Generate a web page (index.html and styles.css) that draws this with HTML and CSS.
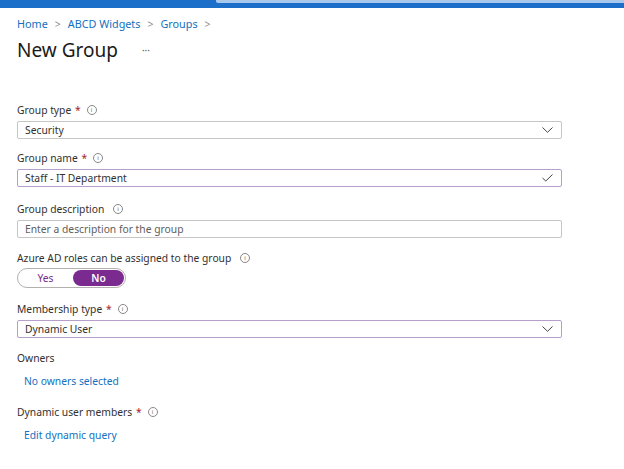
FILE: index.html
```html
<!DOCTYPE html>
<html>
<head>
<meta charset="utf-8">
<link rel="stylesheet" href="styles.css">
</head>
<body>
<header class="topbar">
  <div class="topbar-left"></div>
  <div class="topbar-search"></div>
</header>
<main class="page">
  <nav class="crumbs">
    <a>Home</a><span class="sep">&gt;</span><a>ABCD Widgets</a><span class="sep">&gt;</span><a>Groups</a><span class="sep">&gt;</span>
  </nav>
  <div class="title-row">
    <h1>New Group</h1>
    <span class="more">···</span>
  </div>

  <div class="field f1">
    <div class="label">Group type <span class="req">*</span> <span class="info">i</span></div>
    <div class="box">
      <span class="value">Security</span>
      <svg class="chev" width="11" height="6" viewBox="0 0 11 6"><path d="M0.5 0.5 L5.5 5.3 L10.5 0.5" fill="none" stroke="#444" stroke-width="1"/></svg>
    </div>
  </div>

  <div class="field f2">
    <div class="label">Group name <span class="req">*</span> <span class="info">i</span></div>
    <div class="box active">
      <span class="value">Staff - IT Department</span>
      <svg class="chev" width="11" height="8" viewBox="0 0 11 8"><path d="M0.5 4 L3.8 7 L10.5 0.5" fill="none" stroke="#444" stroke-width="1"/></svg>
    </div>
  </div>

  <div class="field f3">
    <div class="label">Group description <span class="info">i</span></div>
    <div class="box">
      <span class="value placeholder">Enter a description for the group</span>
    </div>
  </div>

  <div class="field f4">
    <div class="label">Azure AD roles can be assigned to the group <span class="info">i</span></div>
    <div class="toggle">
      <span class="opt">Yes</span>
      <span class="opt on">No</span>
    </div>
  </div>

  <div class="field f5">
    <div class="label">Membership type <span class="req">*</span> <span class="info">i</span></div>
    <div class="box active">
      <span class="value">Dynamic User</span>
      <svg class="chev" width="11" height="6" viewBox="0 0 11 6"><path d="M0.5 0.5 L5.5 5.3 L10.5 0.5" fill="none" stroke="#444" stroke-width="1"/></svg>
    </div>
  </div>

  <div class="field f6">
    <div class="label">Owners</div>
    <a class="link">No owners selected</a>
  </div>

  <div class="field f7">
    <div class="label">Dynamic user members <span class="req">*</span> <span class="info">i</span></div>
    <a class="link">Edit dynamic query</a>
  </div>
</main>
</body>
</html>
```

FILE: styles.css
```css
html, body {
  margin: 0;
  padding: 0;
  background: #ffffff;
}
body {
  font-family: "Noto Sans", "Open Sans", sans-serif;
  color: #323130;
  font-size: 10.3px;
}
.topbar {
  display: flex;
  height: 8px;
  background: #1b6fc8;
}
.topbar-left {
  width: 216px;
}
.topbar-search {
  flex: 1;
  height: 3px;
  background: #a9c9ec;
  border-bottom-left-radius: 2px;
}
.page {
  padding: 0 62px 0 17px;
}
.crumbs {
  margin-top: 8px;
  height: 16px;
  line-height: 16px;
  font-size: 10.8px;
  display: flex;
  align-items: center;
}
.crumbs a {
  color: #1470c0;
}
.crumbs .sep {
  color: #8a8886;
  margin: 0 7px;
  font-size: 10.5px;
}
.title-row {
  display: flex;
  align-items: center;
  margin-top: 5px;
  height: 26px;
}
h1 {
  margin: 0;
  font-size: 19px;
  font-weight: 400;
  line-height: 26px;
  color: #1b1a19;
}
.more {
  margin-left: 24px;
  font-size: 10px;
  color: #605e5c;
}
.field {
  display: flex;
  flex-direction: column;
}
.label {
  height: 14px;
  line-height: 14px;
  display: flex;
  align-items: center;
  white-space: pre;
}
.req {
  color: #a4262c;
  margin-left: 1px;
}
.info {
  display: inline-flex;
  align-items: center;
  justify-content: center;
  width: 8px;
  height: 8px;
  border: 1px solid #8a8886;
  border-radius: 50%;
  font-size: 6px;
  line-height: 8px;
  color: #605e5c;
  margin-left: 6px;
}
.box {
  margin-top: 4px;
  height: 16px;
  border: 1px solid #c8c6c4;
  border-radius: 2px;
  display: flex;
  align-items: center;
  justify-content: space-between;
  padding: 0 8px 0 7px;
}
.box.active {
  border-color: #b79fcb;
}
.value {
  line-height: 14px;
}
.placeholder {
  color: #605e5c;
}
.chev {
  display: block;
}
.f1 { margin-top: 40px; }
.f2 { margin-top: 12px; }
.f3 { margin-top: 15px; }
.f4 { margin-top: 13px; }
.f5 { margin-top: 14px; }
.f6 { margin-top: 13px; }
.f7 { margin-top: 17px; }
.toggle {
  margin-top: 3px;
  width: 106px;
  height: 18px;
  border: 1px solid #b3b0ad;
  border-radius: 10px;
  display: flex;
  align-items: center;
  justify-content: space-between;
  padding: 0 1px 0 0;
}
.opt {
  flex: 1;
  text-align: center;
  color: #7b2b8f;
  line-height: 16px;
}
.opt.on {
  flex: 0 0 51px;
  height: 16px;
  background: #7b2b8f;
  color: #ffffff;
  border-radius: 9px;
  font-weight: 600;
}
.link {
  margin-top: 9px;
  margin-left: 7px;
  line-height: 14px;
  color: #1470c0;
}
```
